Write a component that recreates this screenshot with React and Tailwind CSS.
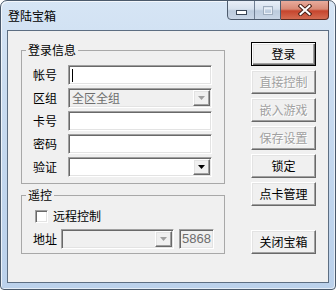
import React from "react";

const edit =
  "border border-t-[#a0a0a0] border-l-[#a0a0a0] border-b-white border-r-white shadow-[inset_1px_1px_0_#696969,inset_-1px_-1px_0_#e3e3e3]";
const raised =
  "bg-[#f0f0f0] border border-t-white border-l-white border-b-[#696969] border-r-[#696969] shadow-[inset_-1px_-1px_0_#a0a0a0,inset_1px_1px_0_#e3e3e3]";

function Arrow({ disabled }) {
  return (
    <div className={`w-[17px] h-full flex items-center justify-center ${raised}`}>
      <svg width="7" height="4" viewBox="0 0 7 4">
        <polygon points="0,0 7,0 3.5,4" fill={disabled ? "#a0a0a0" : "#000"} />
      </svg>
    </div>
  );
}

function Btn({ children, disabled, def, className = "" }) {
  const style = def
    ? "bg-[#f0f0f0] border border-black shadow-[inset_1px_1px_0_#fff,inset_-1px_-1px_0_#696969,inset_-2px_-2px_0_#a0a0a0,inset_2px_2px_0_#e3e3e3]"
    : raised;
  return (
    <div
      className={`w-[65px] h-[24px] flex items-center justify-center text-[12px] leading-[14px] ${style} ${
        disabled ? "text-[#a0a0a0] [text-shadow:1px_1px_0_#fff]" : "text-black"
      } ${className}`}
    >
      {children}
    </div>
  );
}

function Row({ label, children }) {
  return (
    <div className="flex items-center h-[20px]">
      <span className="w-[24px] text-[12px] leading-[14px]">{label}</span>
      <div className="ml-[11px] w-[144px] h-[20px]">{children}</div>
    </div>
  );
}

export default function App() {
  return (
    <div className="w-[336px] h-[290px] font-['Noto_Sans_CJK_SC',sans-serif] text-black">
      <div className="w-[336px] h-[290px] border border-[#4b5a6c] rounded-t-[7px] rounded-b-[4px] overflow-hidden bg-[linear-gradient(180deg,#d6e5f5_0%,#cadcf0_30%,#c0d5ed_70%,#bbd1eb_100%)] shadow-[inset_1px_1px_0_rgba(255,255,255,0.7),inset_-1px_-1px_0_rgba(255,255,255,0.6)]">
        {/* title bar */}
        <div className="h-[29px] flex items-start">
          <div className="pl-[7px] pt-[7px] text-[12px] leading-[16px] text-black">登陆宝箱</div>
          <div className="ml-auto mr-[6px] flex h-[20px] -mt-[1px]">
            <div className="flex border border-[#4e5c6e] rounded-bl-[4px] overflow-hidden bg-[linear-gradient(180deg,#e8eff8_0%,#d6e1ee_45%,#bccbdd_55%,#c9d6e6_100%)]">
              <div className="w-[27px] flex items-center justify-center border-r border-[#6f7e92]">
                <svg width="11" height="5" viewBox="0 0 11 5" className="mt-[4px]">
                  <rect x="0.5" y="0.5" width="10" height="4" fill="#fff" stroke="#3a4656" />
                </svg>
              </div>
              <div className="w-[25px] flex items-center justify-center">
                <svg width="10" height="9" viewBox="0 0 10 9">
                  <rect x="0.5" y="0.5" width="9" height="8" fill="none" stroke="#9eacbd" />
                  <rect x="1.5" y="2.5" width="7" height="5" fill="none" stroke="#e8eef6" />
                </svg>
              </div>
            </div>
            <div className="w-[48px] flex items-center justify-center border border-l-0 border-[#5b2b22] rounded-br-[4px] bg-[linear-gradient(180deg,#e8ab9c_0%,#d88a76_45%,#c6452d_55%,#d46c52_100%)]">
              <svg width="14" height="12" viewBox="0 0 14 12">
                <path d="M2.5 2 L11.5 10 M11.5 2 L2.5 10" stroke="#4a2218" strokeWidth="4" strokeLinecap="square" />
                <path d="M2.5 2 L11.5 10 M11.5 2 L2.5 10" stroke="#fff" strokeWidth="2" strokeLinecap="square" />
              </svg>
            </div>
          </div>
        </div>

        {/* client area */}
        <div className="ml-[6px] w-[322px] h-[253px] border border-[#5d6e82] bg-[#f0f0f0] flex">
          {/* left column */}
          <div className="ml-[13px] mt-[12px] w-[204px] flex flex-col">
            <fieldset className="border border-[#a8a8a8] w-[204px]">
              <legend className="ml-[4px] px-[2px] text-[12px] leading-[14px]">登录信息</legend>
              <div className="pl-[11px] pt-[8px] pb-[6px] flex flex-col gap-[3px]">
                <Row label="帐号">
                  <div className={`w-full h-full bg-white flex items-center ${edit}`}>
                    <span className="ml-[3px] w-[1px] h-[13px] bg-black" />
                  </div>
                </Row>
                <Row label="区组">
                  <div className={`w-full h-full bg-[#f0f0f0] flex p-[1px] ${edit}`}>
                    <span className="flex-1 pl-[2px] text-[12px] leading-[16px] text-[#6d6d6d]">全区全组</span>
                    <Arrow disabled />
                  </div>
                </Row>
                <Row label="卡号">
                  <div className={`w-full h-full bg-white ${edit}`} />
                </Row>
                <Row label="密码">
                  <div className={`w-full h-full bg-white ${edit}`} />
                </Row>
                <Row label="验证">
                  <div className={`w-full h-full bg-white flex p-[1px] ${edit}`}>
                    <span className="flex-1" />
                    <Arrow />
                  </div>
                </Row>
              </div>
            </fieldset>

            <fieldset className="mt-[4px] border border-[#a8a8a8] w-[204px]">
              <legend className="ml-[4px] px-[2px] text-[12px] leading-[14px]">遥控</legend>
              <div className="pt-[6px] pb-[4px] flex flex-col">
                <div className="h-[16px] flex items-center pl-[13px]">
                  <div className={`w-[13px] h-[13px] bg-white ${edit}`} />
                  <span className="ml-[5px] text-[12px] leading-[14px]">远程控制</span>
                </div>
                <div className="mt-[5px] h-[20px] flex items-center pl-[11px]">
                  <span className="w-[24px] text-[12px] leading-[14px]">地址</span>
                  <div className={`ml-[4px] w-[113px] h-[20px] bg-[#f0f0f0] flex p-[1px] ${edit}`}>
                    <span className="flex-1" />
                    <Arrow disabled />
                  </div>
                  <div
                    className={`ml-[5px] w-[35px] h-[20px] bg-[#f0f0f0] flex items-center pl-[2px] font-['Liberation_Sans',sans-serif] text-[13px] leading-[14px] text-[#6d6d6d] ${edit}`}
                  >
                    5868
                  </div>
                </div>
              </div>
            </fieldset>
          </div>

          {/* right column */}
          <div className="ml-[26px] mt-[11px] flex flex-col gap-[4px]">
            <Btn def>登录</Btn>
            <Btn disabled>直接控制</Btn>
            <Btn disabled>嵌入游戏</Btn>
            <Btn disabled>保存设置</Btn>
            <Btn>锁定</Btn>
            <Btn>点卡管理</Btn>
            <Btn className="mt-[20px]">关闭宝箱</Btn>
          </div>
        </div>
      </div>
    </div>
  );
}
